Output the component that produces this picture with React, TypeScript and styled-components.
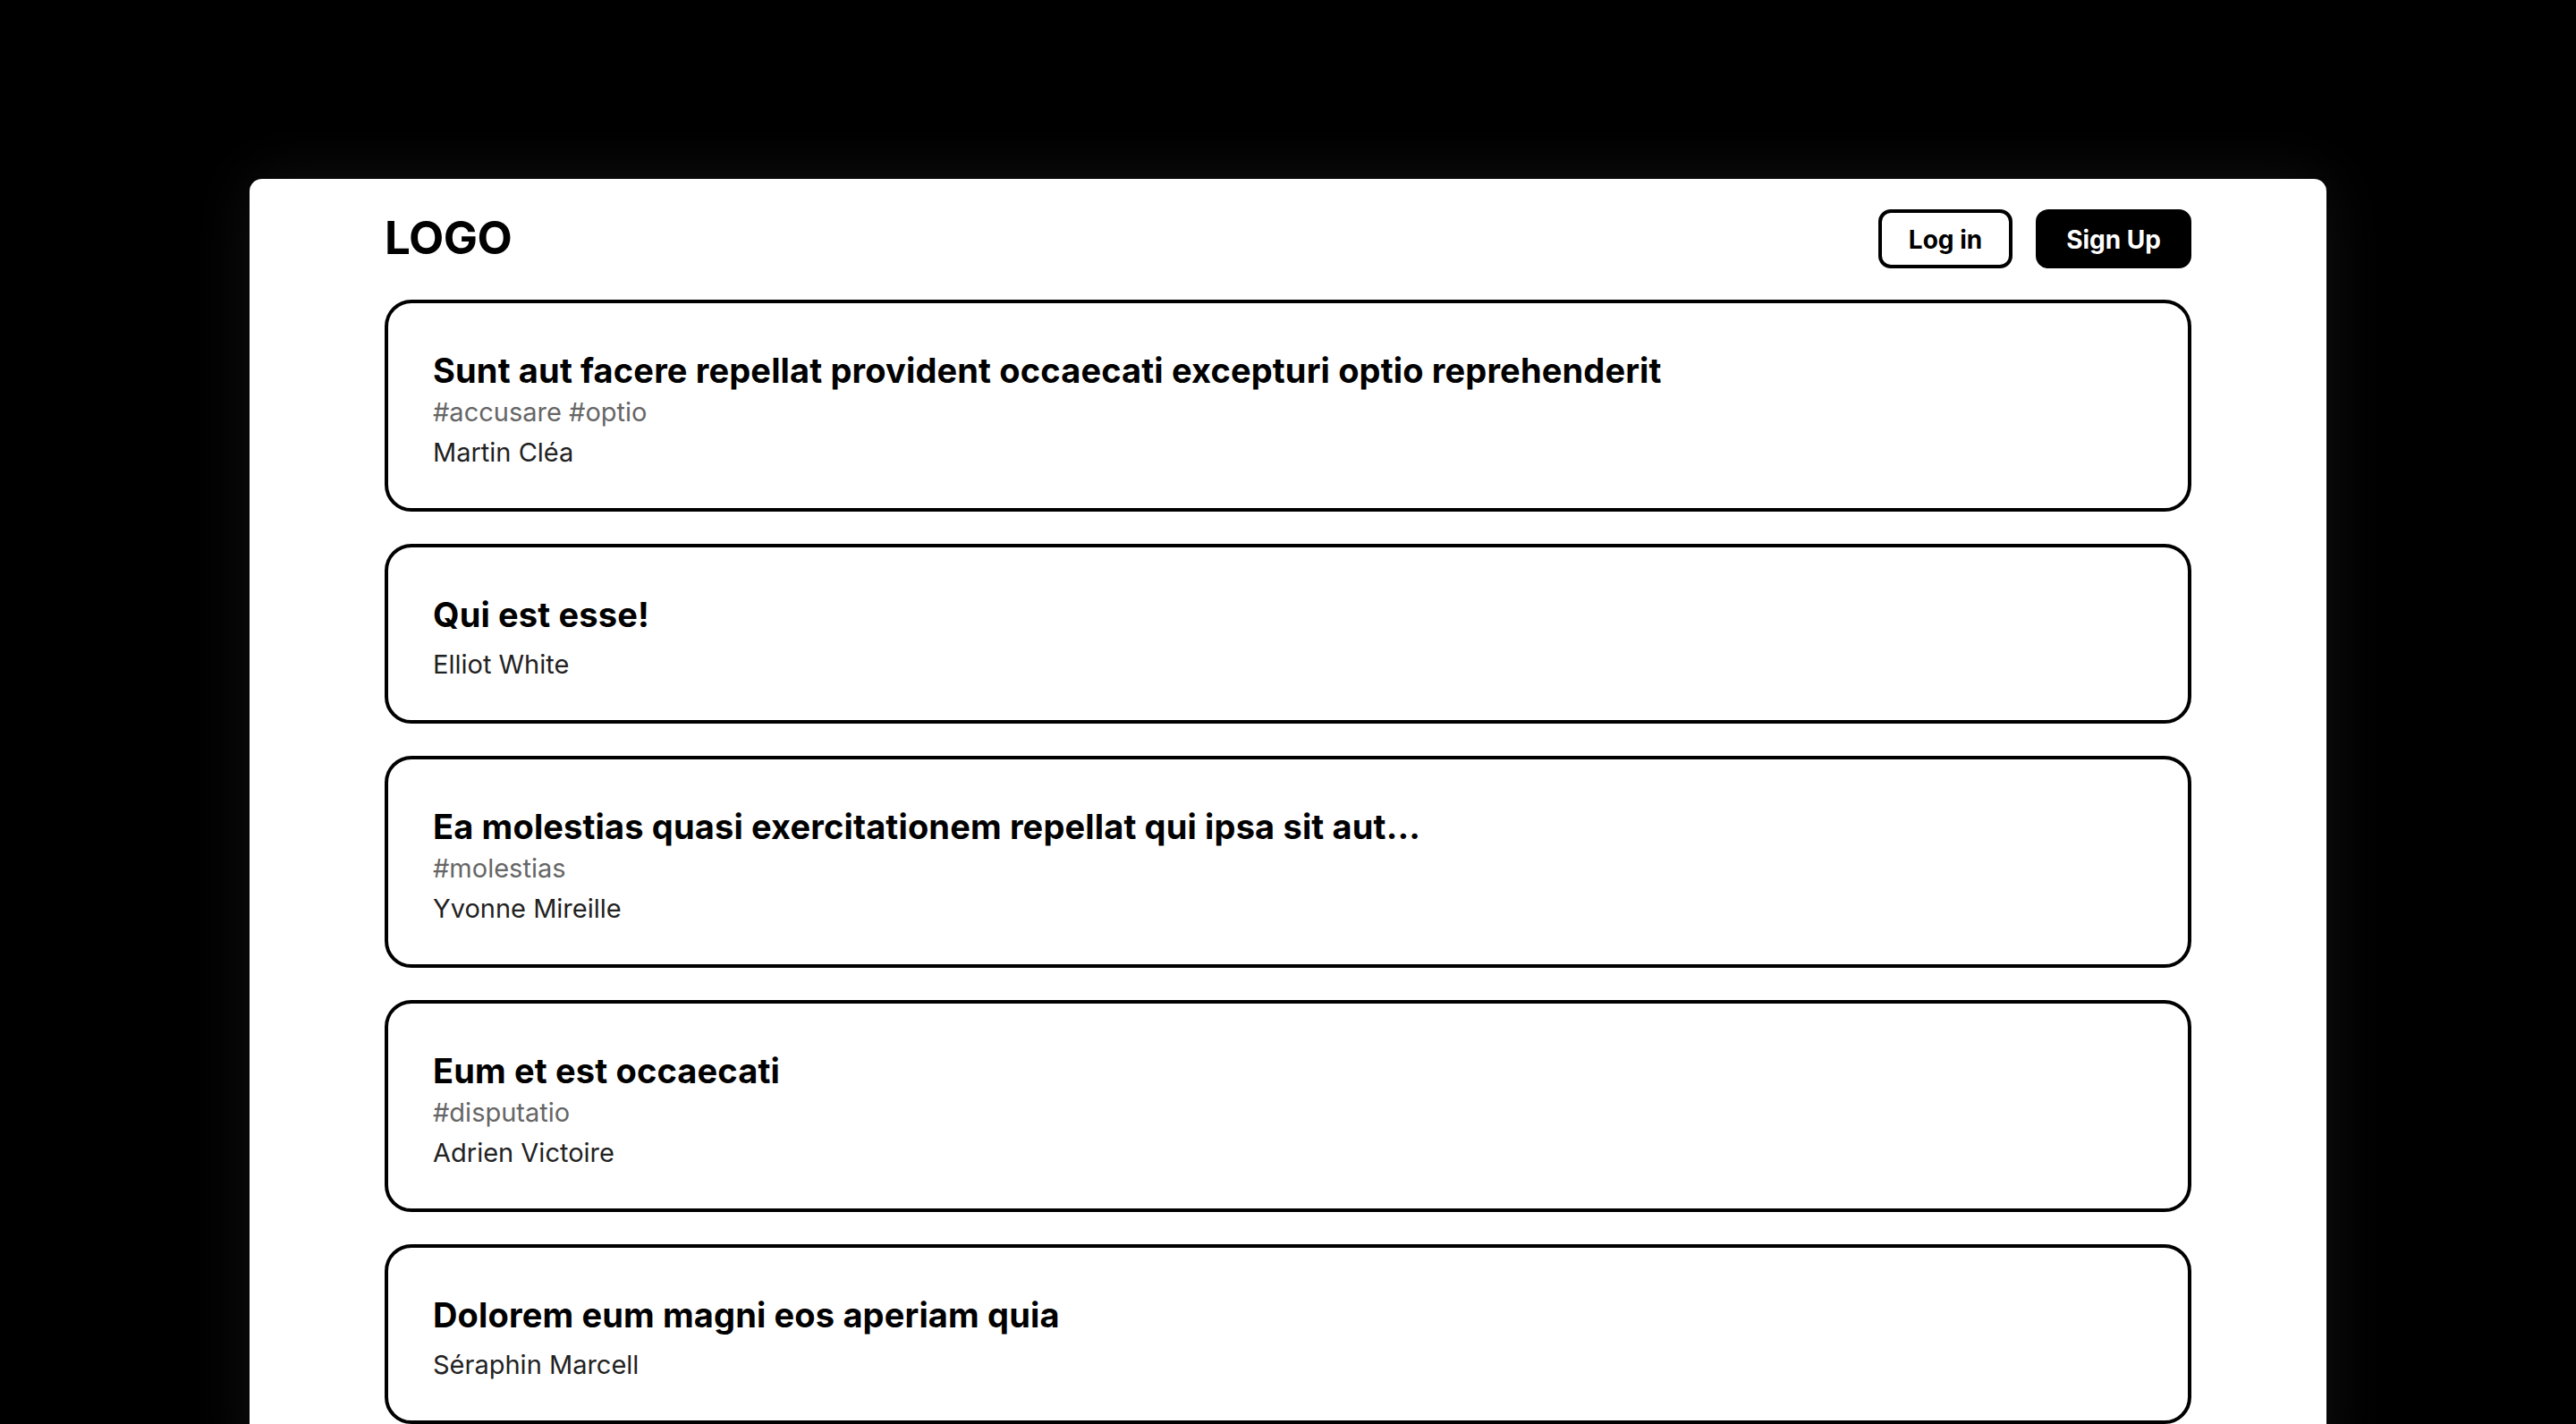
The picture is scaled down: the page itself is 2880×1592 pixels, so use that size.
import React from "react";
import styled, { createGlobalStyle } from "styled-components";

const GlobalStyle = createGlobalStyle`
  html, body {
    margin: 0;
    padding: 0;
    background: #000;
  }
  body {
    font-family: Inter, "Noto Sans", "Liberation Sans", sans-serif;
    overflow: hidden;
    -webkit-font-smoothing: antialiased;
  }
  * { box-sizing: border-box; }
`;

const Page = styled.div`
  min-height: 100vh;
  background: #000;
  padding-top: 200px;
`;

const Panel = styled.main`
  width: 2322px;
  margin: 0 auto;
  background: #fff;
  border-radius: 14px 14px 0 0;
  padding: 34px 151px 60px 151px;
  box-shadow: 0 0 70px rgba(255, 255, 255, 0.07);
  display: flex;
  flex-direction: column;
  gap: 35px;
`;

const Header = styled.header`
  display: flex;
  align-items: center;
  justify-content: space-between;
  height: 66px;
`;

const Logo = styled.div`
  font-size: 51px;
  font-weight: 700;
  color: #000;
  letter-spacing: -0.5px;
  line-height: 1;
  padding-bottom: 4px;
`;

const Actions = styled.nav`
  display: flex;
  gap: 26px;
`;

const Button = styled.button<{ $primary?: boolean }>`
  height: 66px;
  padding: 2px 30px 0 30px;
  border: 4px solid #000;
  border-radius: 14px;
  background: ${(p) => (p.$primary ? "#000" : "#fff")};
  color: ${(p) => (p.$primary ? "#fff" : "#000")};
  font-family: Inter, "Noto Sans", "Liberation Sans", sans-serif;
  font-size: 28px;
  font-weight: 700;
  cursor: pointer;
`;

const List = styled.section`
  display: flex;
  flex-direction: column;
  gap: 36px;
`;

const Card = styled.article`
  border: 4px solid #000;
  border-radius: 30px;
  padding: 53px 50px 44px 50px;
  display: flex;
  flex-direction: column;
`;

const Title = styled.h2`
  margin: 0 0 7px 0;
  font-size: 38px;
  line-height: 44px;
  font-weight: 700;
  color: #000;
  letter-spacing: 0.15px;
`;

const Tags = styled.div`
  font-size: 29px;
  line-height: 36px;
  color: #666;
`;

const Author = styled.div`
  margin-top: 9px;
  font-size: 29px;
  line-height: 36px;
  color: #222;
`;

type Post = { title: string; tags?: string[]; author: string };

const posts: Post[] = [
  {
    title:
      "Sunt aut facere repellat provident occaecati excepturi optio reprehenderit",
    tags: ["accusare", "optio"],
    author: "Martin Cléa",
  },
  { title: "Qui est esse!", author: "Elliot White" },
  {
    title: "Ea molestias quasi exercitationem repellat qui ipsa sit aut...",
    tags: ["molestias"],
    author: "Yvonne Mireille",
  },
  {
    title: "Eum et est occaecati",
    tags: ["disputatio"],
    author: "Adrien Victoire",
  },
  { title: "Dolorem eum magni eos aperiam quia", author: "Séraphin Marcell" },
];

export default function App() {
  return (
    <Page>
      <GlobalStyle />
      <Panel>
        <Header>
          <Logo>LOGO</Logo>
          <Actions>
            <Button>Log in</Button>
            <Button $primary>Sign Up</Button>
          </Actions>
        </Header>
        <List>
          {posts.map((p) => (
            <Card key={p.title}>
              <Title>{p.title}</Title>
              {p.tags && <Tags>{p.tags.map((t) => `#${t}`).join(" ")}</Tags>}
              <Author>{p.author}</Author>
            </Card>
          ))}
        </List>
      </Panel>
    </Page>
  );
}
